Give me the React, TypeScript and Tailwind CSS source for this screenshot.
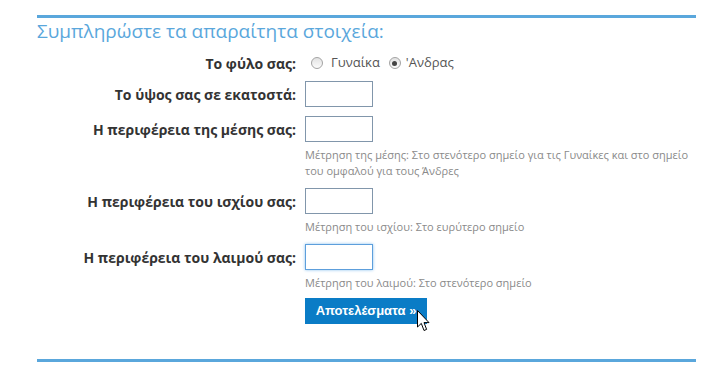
import React, { useState } from "react";

const font = { fontFamily: '"Open Sans", "Noto Sans", sans-serif' };

function Radio({ checked }: { checked?: boolean }) {
  return (
    <span className="inline-flex w-[12px] h-[12px] rounded-full border border-[#a3a3a3] bg-gradient-to-b from-[#e2e2e2] to-[#fbfbfb] items-center justify-center shrink-0">
      {checked && <span className="w-[5px] h-[5px] rounded-full bg-[#444]" />}
    </span>
  );
}

function Field({
  label,
  help,
  focused,
}: {
  label: string;
  help?: React.ReactNode;
  focused?: boolean;
}) {
  return (
    <div className="flex gap-x-[9px]">
      <div className="w-[259px] h-[26px] flex items-center justify-end font-bold text-[14px] text-[#333] shrink-0">
        {label}
      </div>
      <div className="flex flex-col w-[390px]">
        <input
          type="text"
          className={
            focused
              ? "w-[68px] h-[26px] border border-[#5d9fdc] shadow-[0_0_3px_#8cc2f0] outline-none bg-white"
              : "w-[68px] h-[26px] border border-[#8196ab] outline-none bg-white"
          }
        />
        {help && (
          <div className="mt-[5px] text-[11px] leading-4 text-[#8a8a8a]">{help}</div>
        )}
      </div>
    </div>
  );
}

export default function App() {
  const [sex] = useState("male");

  return (
    <div className="bg-white w-[712px] h-[367px] overflow-hidden" style={font}>
      <div className="ml-[37px] w-[659px] pt-[15px]">
        <div className="border-t-[3px] border-[#5aa7dc]" />
        <h1 className="mt-[1px] text-[19px] leading-[24px] text-[#5aa7dc] font-normal">
          Συμπληρώστε τα απαραίτητα στοιχεία:
        </h1>

        <div className="mt-[9px] flex flex-col">
          {/* gender */}
          <div className="flex gap-x-[9px] h-[22px] items-center">
            <div className="w-[259px] text-right font-bold text-[14px] text-[#333]">
              Το φύλο σας:
            </div>
            <div className="flex items-center text-[13px] text-[#555] pl-[6px]">
              <Radio checked={sex === "female"} />
              <span className="ml-[8px]">Γυναίκα</span>
              <span className="ml-[9px] flex">
                <Radio checked={sex === "male"} />
              </span>
              <span className="ml-[5px]">'Ανδρας</span>
            </div>
          </div>

          <div className="mt-[7px] flex flex-col gap-y-[9px]">
            <Field label="Το ύψος σας σε εκατοστά:" />
            <Field
              label="Η περιφέρεια της μέσης σας:"
              help="Μέτρηση της μέσης: Στο στενότερο σημείο για τις Γυναίκες και στο σημείο του ομφαλού για τους Άνδρες"
            />
            <Field
              label="Η περιφέρεια του ισχίου σας:"
              help="Μέτρηση του ισχίου: Στο ευρύτερο σημείο"
            />
            <Field
              label="Η περιφέρεια του λαιμού σας:"
              help="Μέτρηση του λαιμού: Στο στενότερο σημείο"
              focused
            />
          </div>

          <div className="mt-[6px] pl-[268px] relative">
            <button
              className="w-[122px] h-[26px] bg-[#0a7cc6] text-white font-bold text-[13px]"
              style={{ fontFamily: '"Liberation Sans", Arial, sans-serif' }}
            >
              Αποτελέσματα »
            </button>
            <svg
              className="absolute left-[380px] top-[13px]"
              width="13"
              height="22"
              viewBox="0 0 13 22"
            >
              <path
                d="M0.5 0.5 L0.5 17 L4.3 13.4 L7 20.5 L9.6 19.4 L7 12.6 L12 12.6 Z"
                fill="#fff"
                stroke="#000"
                strokeWidth="1"
                strokeLinejoin="miter"
              />
            </svg>
          </div>
        </div>

        <div className="mt-[35px] border-t-[3px] border-[#5aa7dc]" />
      </div>
    </div>
  );
}
